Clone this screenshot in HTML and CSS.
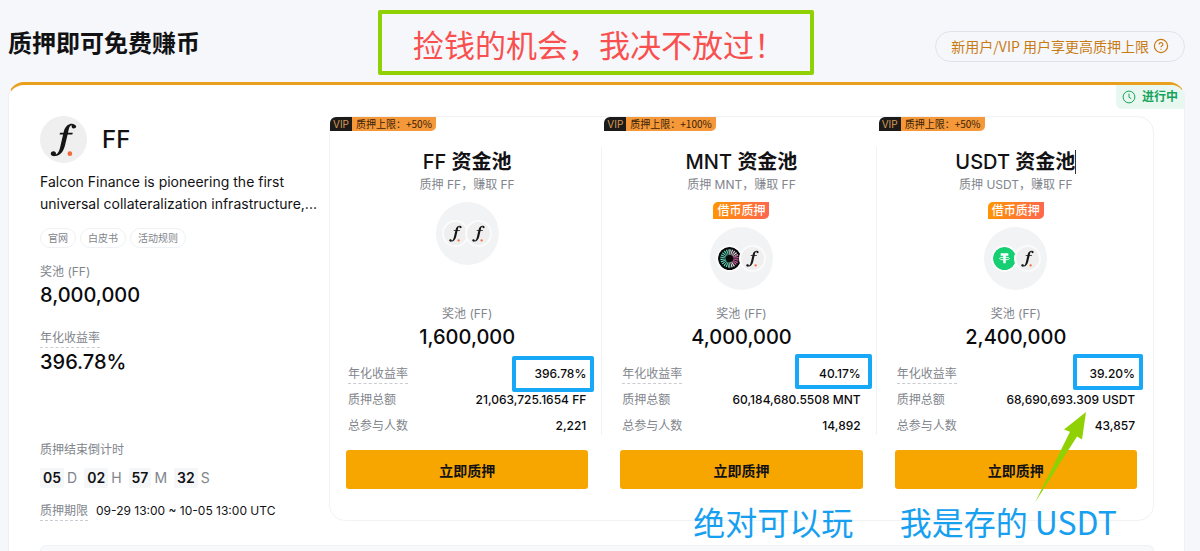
FILE: index.html
```html
<!DOCTYPE html>
<html lang="zh-CN">
<head>
<meta charset="utf-8">
<meta name="viewport" content="width=device-width, initial-scale=1">
<title>质押即可免费赚币</title>
<link rel="stylesheet" href="styles.css">
</head>
<body>
<svg class="defs" aria-hidden="true">
  <defs>
    <symbol id="ff" viewBox="0 0 48 48">
      <circle cx="24" cy="24" r="24" fill="#efefef"/>
      <path d="M37 10.500C35.500 7.500 31 7 28 9.500C25.500 11.500 24.500 14.500 24 17H20.500L20 18.800H23.600L20.700 31.500C19.800 35.500 18.500 38.800 16.200 39.300C16.800 37.500 15.600 36 13.800 36C12 36 11 37.200 11 38.500C11 40.300 13 41.300 15.500 40.900C21 40 24 36 25.500 30L28.200 18.800H33L33.500 17H28.600C29.500 13 30 9.600 32.500 9.400C31.800 11.200 32.700 12.800 34.300 12.800C35.800 12.800 36.900 11.900 37 10.500Z" fill="#151515"/>
      <circle cx="30.500" cy="38.500" r="2.400" fill="#f26b3a"/>
    </symbol>
    <symbol id="mnt" viewBox="0 0 24 24">
      <circle cx="12" cy="12" r="12" fill="#08090b"/>
      <g fill="none" stroke-width="5.600">
        <path d="M12 5.200A6.800 6.800 0 0 0 12 18.800" stroke="#62d5b8" stroke-dasharray="1 .78"/>
        <path d="M12 5.200A6.800 6.800 0 0 1 18.200 9.200" stroke="#e3d5dd" stroke-dasharray="1 .78"/>
        <path d="M18.200 9.200A6.800 6.800 0 0 1 16 17.500" stroke="#d765a8" stroke-dasharray="1 .78"/>
        <path d="M16 17.500A6.800 6.800 0 0 1 12 18.800" stroke="#d5e5df" stroke-dasharray="1 .78"/>
      </g>
    </symbol>
    <symbol id="usdt" viewBox="0 0 24 24">
      <circle cx="12" cy="12" r="12" fill="#17cf73"/>
      <path d="M8 6.500H16V9H13.300V17H10.700V9H8Z" fill="#fff"/>
      <ellipse cx="12" cy="12" rx="5.300" ry="1.400" fill="none" stroke="#fff" stroke-width=".9"/>
    </symbol>
  </defs>
</svg>
<main class="page">
  <header class="header">
    <h1 class="title">质押即可免费赚币</h1>
    <button class="limit" type="button">新用户/VIP 用户享更高质押上限
      <svg class="limit-icon" viewBox="0 0 16 16" aria-hidden="true"><circle cx="8" cy="8" r="6.600"/><path d="M6.100 6.500C6.100 4.100 9.900 4.100 9.900 6.400C9.900 7.900 8 7.800 8 9.300M8 10.800V11.800"/></svg>
    </button>
    <p class="callout">捡钱的机会，我决不放过！</p>
  </header>

  <section class="card">
    <span class="status"><svg class="status-icon" viewBox="0 0 14 14" aria-hidden="true"><circle cx="7" cy="7" r="5.900"/><path d="M7 3.600V7.300L9.200 8.600"/></svg>进行中</span>
    <div class="card-main">
      <div class="project">
        <div class="brand"><svg class="brand-logo" aria-hidden="true"><use href="#ff"/></svg><h2 class="brand-name">FF</h2></div>
        <p class="about">Falcon Finance is pioneering the first universal collateralization infrastructure,...</p>
        <nav class="tags"><a class="tag" href="#site">官网</a><a class="tag" href="#paper">白皮书</a><a class="tag" href="#rules">活动规则</a></nav>
        <div class="figure"><span class="label">奖池 (FF)</span><strong class="amount">8,000,000</strong></div>
        <div class="figure figure-apr"><span class="label hint">年化收益率</span><strong class="amount">396.78%</strong></div>
        <div class="schedule">
          <span class="label">质押结束倒计时</span>
          <div class="countdown"><b class="count">05</b><span class="unit">D</span><b class="count">02</b><span class="unit">H</span><b class="count">57</b><span class="unit">M</span><b class="count">32</b><span class="unit">S</span></div>
          <div class="period"><span class="label hint">质押期限</span><span>09-29 13:00 ~ 10-05 13:00 UTC</span></div>
        </div>
      </div>

      <div class="pools">
        <article class="pool">
          <div class="vip"><span class="vip-tag">VIP</span><span class="vip-text">质押上限：+50%</span></div>
          <h3 class="pool-name">FF <b>资金池</b></h3>
          <p class="pool-note">质押 FF，赚取 FF</p>
          <div class="hero"><div class="pair"><svg class="coin" aria-hidden="true"><use href="#ff"/></svg><svg class="coin" aria-hidden="true"><use href="#ff"/></svg></div></div>
          <span class="label">奖池 (FF)</span>
          <strong class="amount">1,600,000</strong>
          <dl class="stats">
            <div class="stat"><dt class="hint">年化收益率</dt><dd class="marked">396.78%</dd></div>
            <div class="stat"><dt>质押总额</dt><dd>21,063,725.1654 FF</dd></div>
            <div class="stat"><dt>总参与人数</dt><dd>2,221</dd></div>
          </dl>
          <button class="stake" type="button">立即质押</button>
        </article>
        <article class="pool">
          <div class="vip"><span class="vip-tag">VIP</span><span class="vip-text">质押上限：+100%</span></div>
          <h3 class="pool-name">MNT <b>资金池</b></h3>
          <p class="pool-note">质押 MNT，赚取 FF</p>
          <div class="hero"><span class="borrow">借币质押</span><div class="pair"><svg class="coin" aria-hidden="true"><use href="#mnt"/></svg><svg class="coin" aria-hidden="true"><use href="#ff"/></svg></div></div>
          <span class="label">奖池 (FF)</span>
          <strong class="amount">4,000,000</strong>
          <dl class="stats">
            <div class="stat"><dt class="hint">年化收益率</dt><dd class="marked marked-mid">40.17%</dd></div>
            <div class="stat"><dt>质押总额</dt><dd>60,184,680.5508 MNT</dd></div>
            <div class="stat"><dt>总参与人数</dt><dd>14,892</dd></div>
          </dl>
          <button class="stake" type="button">立即质押</button>
          <p class="remark remark-mid">绝对可以玩</p>
        </article>
        <article class="pool">
          <div class="vip"><span class="vip-tag">VIP</span><span class="vip-text">质押上限：+50%</span></div>
          <h3 class="pool-name"><span class="caret">USDT <b>资金池</b></span></h3>
          <p class="pool-note">质押 USDT，赚取 FF</p>
          <div class="hero"><span class="borrow">借币质押</span><div class="pair"><svg class="coin" aria-hidden="true"><use href="#usdt"/></svg><svg class="coin" aria-hidden="true"><use href="#ff"/></svg></div></div>
          <span class="label">奖池 (FF)</span>
          <strong class="amount">2,400,000</strong>
          <dl class="stats">
            <div class="stat"><dt class="hint">年化收益率</dt><dd class="marked marked-end">39.20%</dd></div>
            <div class="stat"><dt>质押总额</dt><dd>68,690,693.309 USDT</dd></div>
            <div class="stat"><dt>总参与人数</dt><dd>43,857</dd></div>
          </dl>
          <button class="stake" type="button">立即质押</button>
          <svg class="arrow" viewBox="0 0 52 91" aria-hidden="true"><path d="M51 0L29 17.500L35 19.800L0 90.500L42 24.500L47 27.500Z"/></svg>
          <p class="remark remark-end">我是存的 USDT</p>
        </article>
      </div>
    </div>
    <div class="drawer"></div>
  </section>
</main>
</body>
</html>
```

FILE: styles.css
```css
*, *::before, *::after { box-sizing: border-box; }

body {
  margin: 0;
  background: #f5f7fb;
  color: #121214;
  font-family: Inter, "Noto Sans CJK SC", sans-serif;
  font-size: 12px;
  line-height: 18px;
}

h1, h2, h3, p, dl, dd { margin: 0; }
button { font-family: inherit; cursor: pointer; }
.defs { position: absolute; width: 0; height: 0; }

.page {
  display: flex;
  flex-direction: column;
  min-height: 100vh;
  padding: 10px 15px 0 8px;
}

.header {
  position: relative;
  display: flex;
  align-items: center;
  justify-content: space-between;
  height: 72px;
}

.title { font-size: 24px; line-height: 36px; font-weight: 700; padding-bottom: 4px; }

.limit {
  display: flex;
  align-items: center;
  gap: 4px;
  height: 31px;
  padding: 0 15px;
  border: 1px solid #dfe3e9;
  border-radius: 16px;
  background: transparent;
  color: #c97b13;
  font-family: "Noto Sans CJK SC", sans-serif;
  font-size: 14px;
}
.limit-icon { width: 16px; height: 16px; fill: none; stroke: currentColor; stroke-width: 1.2; }

.callout {
  position: absolute;
  top: 0;
  left: 370px;
  width: 436px;
  height: 65px;
  padding-left: 31px;
  border: 4px solid #8fd103;
  border-radius: 2px;
  color: #f9504f;
  font-family: "Noto Sans CJK SC", sans-serif;
  font-size: 31px;
  font-weight: 400;
  line-height: 60px;
  white-space: nowrap;
}

.card {
  position: relative;
  display: flex;
  flex-direction: column;
  flex: 1;
  padding: 31px 30px 0 31px;
  border: 1px solid #eef0f4;
  border-top: 3px solid #e9a01d;
  border-bottom: 0;
  border-radius: 16px 16px 0 0;
  background: #fff;
}

.status {
  position: absolute;
  top: 0;
  right: 0;
  display: flex;
  align-items: center;
  gap: 6px;
  height: 24px;
  padding: 0 6px;
  border-radius: 0 12px 0 6px;
  background: #e8f8f0;
  color: #17a35c;
  font-weight: 700;
}
.status-icon { width: 14px; height: 14px; fill: none; stroke: currentColor; stroke-width: 1; }

.card-main { display: grid; grid-template-columns: 289px 1fr; }
.project { display: flex; flex-direction: column; }

.brand { display: flex; align-items: center; gap: 15px; }
.brand-logo { width: 47px; height: 47px; }
.brand-name { font-size: 24px; line-height: 32px; font-weight: 500; }
.about { margin-top: 8px; font-size: 14px; line-height: 22px; }

.tags { display: flex; gap: 4px; margin: 13px 0 15px; }
.tag {
  padding: 0 7px;
  border: 1px solid #f0f1f4;
  border-radius: 10px;
  color: #81858c;
  font-size: 10px;
  line-height: 18px;
  text-decoration: none;
}

.label { color: #81858c; line-height: 18px; }
.figure { display: flex; flex-direction: column; align-items: flex-start; }
.figure-apr { margin-top: 20px; }
.amount { color: #0b0b0d; font-size: 20px; line-height: 28px; font-weight: 500; }
.hint { border-bottom: 1px dashed #c9cdd3; }

.schedule { display: flex; flex-direction: column; margin-top: auto; }
.countdown { display: flex; align-items: center; gap: 3px; margin: 9px 0 14px; }
.count {
  padding: 0 3px;
  border-radius: 2px;
  background: #f5f6f8;
  font-size: 14px;
  line-height: 20px;
  font-weight: 600;
}
.unit { margin-right: 4px; color: #81858c; font-size: 14px; }
.period { display: flex; gap: 8px; align-items: flex-start; }

.pools {
  display: grid;
  grid-template-columns: repeat(3, 1fr);
  border: 1px solid #f1f2f5;
  border-radius: 16px;
}
.pool {
  position: relative;
  display: flex;
  flex-direction: column;
  align-items: center;
  padding: 0 16px 31px;
}
.pool + .pool::before {
  content: "";
  position: absolute;
  top: 30px;
  bottom: 85px;
  left: -3px;
  border-left: 1px solid #f1f2f5;
}

.vip { display: flex; align-self: flex-start; margin-left: -16px; font-size: 10px; line-height: 14px; }
.vip-tag { padding: 0 3px; border-radius: 6px 0 0 0; background: #1c1b1a; color: #d59a54; }
.vip-text {
  padding: 0 4px;
  border-radius: 0 0 5px 0;
  background: #f5983a;
  color: #3a2208;
  font-family: "Noto Sans CJK SC", sans-serif;
}

.pool-name { margin-top: 17px; font-size: 20px; line-height: 28px; font-weight: 500; }
.pool-name b { font-weight: 700; }
.caret { border-right: 1px solid #333; }
.pool-note { color: #81858c; }

.hero { display: flex; flex-direction: column; align-items: center; gap: 8px; height: 111px; padding-top: 8px; }
.borrow {
  padding: 0 4px;
  border-radius: 5px 0 5px 0;
  background: linear-gradient(100deg, #ff9500, #ff6550);
  color: #fff;
  font-size: 12px;
  line-height: 17px;
  font-weight: 500;
}
.pair { display: flex; align-items: center; justify-content: center; width: 63px; height: 63px; border-radius: 50%; background: #f2f3f5; }
.coin { width: 27px; height: 27px; margin: 0 -2px; border: 2px solid #fbfbfb; border-radius: 50%; }

.stats { align-self: stretch; padding: 0 2px; margin-top: 10px; color: #0b0b0d; }
.stat { display: flex; align-items: center; justify-content: space-between; height: 26px; }
.stat dt { color: #81858c; }
.stat dd { font-weight: 500; }
.marked { position: relative; }
.marked::after {
  content: "";
  position: absolute;
  top: -9px;
  right: -8px;
  width: 82px;
  height: 36px;
  border: 4px solid #18a8f8;
  border-radius: 2px;
}
.marked-mid::after { top: -11px; right: -11px; width: 77px; height: 35px; }
.marked-end::after { top: -11px; width: 70px; }

.stake {
  align-self: stretch;
  height: 39px;
  margin-top: 11px;
  border: 0;
  border-radius: 3px;
  background: #f7a600;
  color: #121214;
  font-size: 14px;
  font-weight: 700;
}

.remark {
  position: absolute;
  bottom: -23px;
  color: #18a0f0;
  font-family: "Noto Sans CJK SC", sans-serif;
  font-size: 32px;
  font-weight: 400;
  line-height: 44px;
  white-space: nowrap;
}
.remark-mid { left: 89px; }
.remark-end { left: 21px; }
.arrow { position: absolute; right: 66px; bottom: 17px; width: 52px; height: 91px; fill: #8fd103; }

.drawer {
  flex: 1;
  margin-top: 24px;
  border: 1px solid #f0f1f4;
  border-bottom: 0;
  border-radius: 12px 12px 0 0;
  background: #f8f9fb;
}
```
